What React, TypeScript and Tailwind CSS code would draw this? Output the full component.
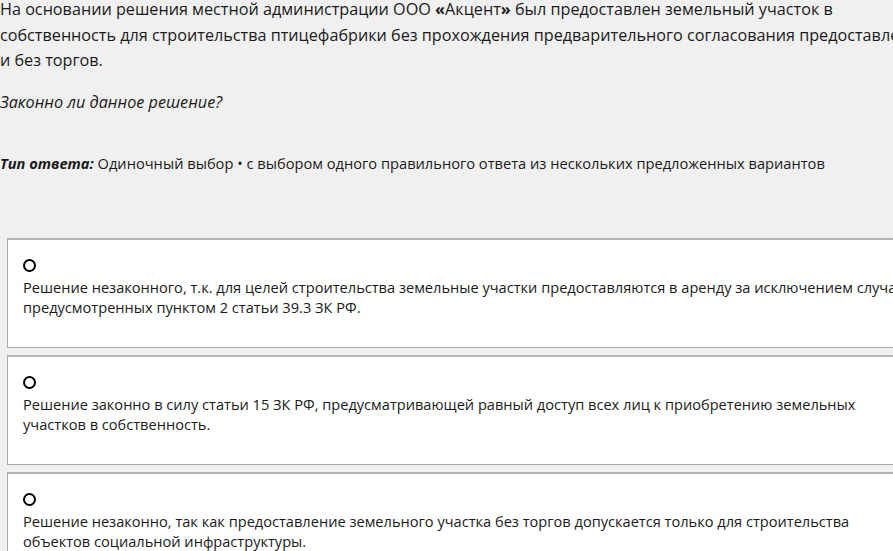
import React from 'react';

const options: string[][] = [
  [
    'Решение незаконного, т.к. для целей строительства земельные участки предоставляются в аренду за исключением случаев,',
    'предусмотренных пунктом 2 статьи 39.3 ЗК РФ.',
  ],
  [
    'Решение законно в силу статьи 15 ЗК РФ, предусматривающей равный доступ всех лиц к приобретению земельных',
    'участков в собственность.',
  ],
  [
    'Решение незаконно, так как предоставление земельного участка без торгов допускается только для строительства',
    'объектов социальной инфраструктуры.',
  ],
];

const App: React.FC = () => {
  return (
    <div className="w-[893px] h-[551px] overflow-hidden bg-[#f0f0f0] text-[#1a1a1a] font-['Open_Sans',sans-serif]">
      <div className="w-[1000px] whitespace-nowrap">
        <p className="text-[16.2px] leading-[25.5px] mt-[-3px]">
          На основании решения местной администрации ООО <b>«</b>Акцент<b>»</b> был предоставлен земельный участок в
          <br />
          собственность для строительства птицефабрики без прохождения предварительного согласования предоставления земельного участка
          <br />
          и без торгов.
        </p>
        <p className="text-[16.2px] italic mt-[16px] leading-[25px]">Законно ли данное решение?</p>
        <p className="text-[14.65px] mt-[37px] leading-[22px]">
          <b className="italic">Тип ответа:</b> Одиночный выбор • с выбором одного правильного ответа из нескольких предложенных вариантов
        </p>

        <div className="mt-[64px] ml-[7px] flex flex-col gap-[7px]">
          {options.map((lines, i) => (
            <div key={i} className="bg-white border border-[#a9a9a9] border-t-2 border-t-[#b4b4b4] h-[110px] pl-[15px] pt-[19px]">
              <div className="w-[13px] h-[13px] rounded-full border-2 border-black" />
              <p className="text-[14.6px] leading-[20px] mt-[5px]">
                {lines[0]}
                <br />
                {lines[1]}
              </p>
            </div>
          ))}
        </div>
      </div>
    </div>
  );
};

export default App;
